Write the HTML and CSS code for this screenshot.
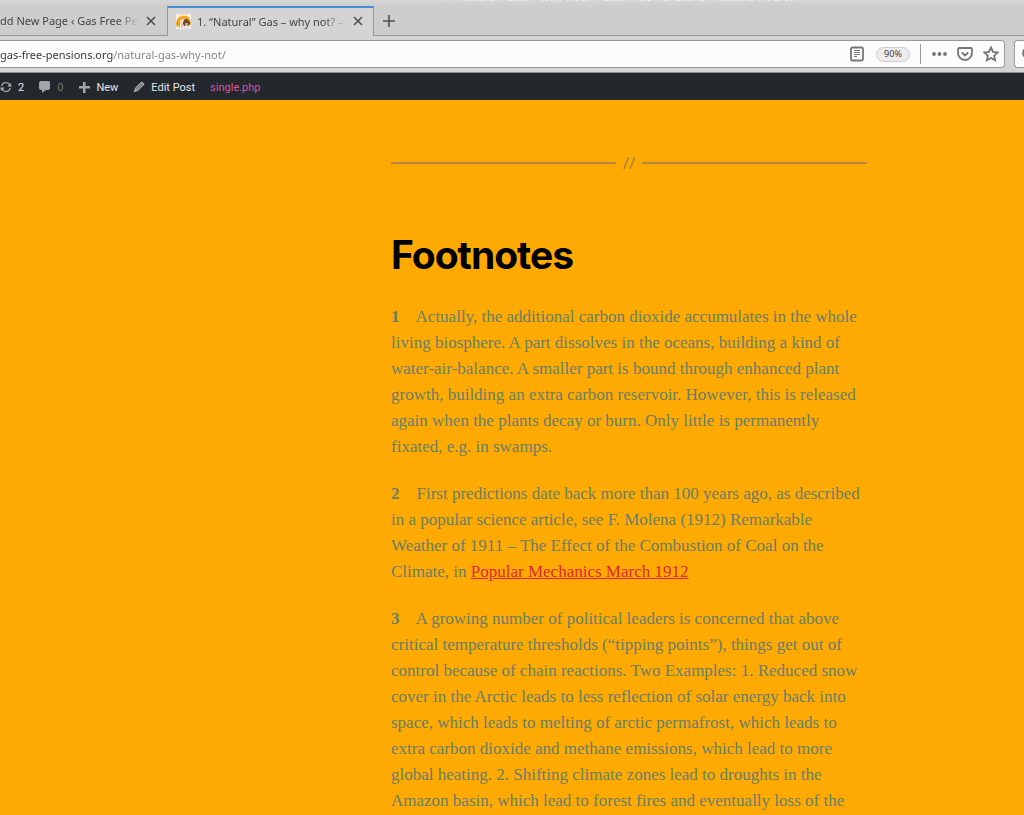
FILE: index.html
```html
<!DOCTYPE html>
<html lang="en">
<head>
    <meta charset="UTF-8">
    <meta name="viewport" content="width=device-width, initial-scale=1.0">
    <title>1. “Natural” Gas – why not? – Gas Free Pensions</title>
    <link rel="stylesheet" href="styles.css">
</head>
<body>
    <header class="browser">
        <div class="title-bar"><span class="window-title">1. “Natural” Gas – why not? – Gas Free Pensions - Mozilla Firefox</span></div>

        <div class="tabs">
            <div class="tab">
                <span class="tab-title">dd New Page ‹ Gas Free Pensions</span>
                <button class="icon-button" aria-label="Close tab">
                    <svg width="10" height="10" viewBox="0 0 10 10"><path d="M1 1l8 8M9 1l-8 8"/></svg>
                </button>
            </div>
            <div class="tab active">
                <svg class="favicon" width="15" height="15" viewBox="0 0 15 15">
                    <rect width="15" height="15" fill="#f6f1e8"/>
                    <path d="M0 11C0 7 1 5 3 3l4-1h4c2 1 4 4 4 8l-2 2-2-6-4-1-3 2-1 5z" fill="#f5a623"/>
                    <path d="M3 1h8" stroke="#f8cf86" stroke-width="1"/>
                    <path d="M7 10c0-3 1-5 3-5s4 2 4 5l-2 2H8z" fill="#6a4a28"/>
                    <path d="M4 8l1-1 2 1v6H4z" fill="#fdfdfd"/>
                    <path d="M9 9h3v3H9z" fill="#c9a888"/>
                    <path d="M1 13l1-6M3 14l1-6M6 14V8" stroke="#e58e20" stroke-width="1"/>
                    <path d="M8 13l2-1 3 1v2H8z" fill="#dfe3ee"/>
                </svg>
                <span class="tab-title">1. “Natural” Gas – why not? – Gas Free Pensions</span>
                <button class="icon-button" aria-label="Close tab">
                    <svg width="10" height="10" viewBox="0 0 10 10"><path d="M1 1l8 8M9 1l-8 8"/></svg>
                </button>
            </div>
            <button class="icon-button new-tab" aria-label="New tab">
                <svg width="14" height="14" viewBox="0 0 14 14"><path d="M7 1v12M1 7h12"/></svg>
            </button>
        </div>

        <div class="toolbar">
            <div class="address-bar">
                <input class="address" type="text" value="gas-free-pensions.org/natural-gas-why-not/" aria-label="Address">
                <button class="icon-button" aria-label="Reader view">
                    <svg width="14" height="16" viewBox="0 0 14 16"><rect x="1" y="1.500" width="12" height="13" rx="1.5"/><path class="thin" d="M4 4.500h6M4 6.500h6M4 8.500h6M4 10.500h3"/></svg>
                </button>
                <button class="zoom-level">90%</button>
                <span class="divider"></span>
                <button class="icon-button" aria-label="Page actions">
                    <svg width="16" height="16" viewBox="0 0 16 16"><g class="solid"><circle cx="3" cy="8" r="1.900"/><circle cx="8.500" cy="8" r="1.900"/><circle cx="14" cy="8" r="1.900"/></g></svg>
                </button>
                <button class="icon-button" aria-label="Save to Pocket">
                    <svg width="16" height="16" viewBox="0 0 16 16"><path d="M2.500 2h11a1.500 1.500 0 0 1 1.500 1.500V7a7 7 0 0 1-14 0V3.500A1.500 1.500 0 0 1 2.500 2zM4.800 6.500L8 9.600l3.200-3.100"/></svg>
                </button>
                <button class="icon-button" aria-label="Bookmark this page">
                    <svg width="16" height="16" viewBox="0 0 16 16"><path d="M8 1.500l2 4.300 4.700.6-3.500 3.200.9 4.700L8 12l-4.100 2.300.9-4.700L1.300 6.400 6 5.800z"/></svg>
                </button>
            </div>
            <div class="search-bar">
                <svg width="16" height="16" viewBox="0 0 16 16"><circle cx="7" cy="7" r="5"/><path d="M11 11l4 4"/></svg>
            </div>
        </div>
    </header>

    <nav class="admin-bar">
        <a class="admin-item" href="#">
            <svg width="12" height="12" viewBox="0 0 14 14"><path class="stroke" d="M2 6a5 5 0 0 1 9-2M12 8a5 5 0 0 1-9 2"/><path d="M8.500 6.500h5.500L12 2zM5.500 7.500H0L2 12z"/></svg>
            2
        </a>
        <a class="admin-item muted" href="#">
            <svg width="12" height="12" viewBox="0 0 12 12"><path d="M2 0h8a2 2 0 0 1 1 2v5a2 2 0 0 1-2 2H7l-4 3V9H2a2 2 0 0 1-2-2V2a2 2 0 0 1 2-2z"/></svg>
            0
        </a>
        <a class="admin-item" href="#">
            <svg width="12" height="12" viewBox="0 0 12 12"><path d="M5 1h2.500v4H12v2.500H7.500V12H5V7.500H1V5h4z"/></svg>
            New
        </a>
        <a class="admin-item" href="#">
            <svg width="12" height="12" viewBox="0 0 14 14"><path class="stroke" d="M2 12l1.500-4 6-6 2.500 2.500-6 6zM4.500 9.500l5-5"/><path d="M1 13l1.500-5 3.500 3.500zM8.500 2.500l2-2 3 3-2 2z"/></svg>
            Edit Post
        </a>
        <a class="admin-item template" href="#">single.php</a>
    </nav>

    <main class="page">
        <article class="post">
            <div class="separator">//</div>
            <h2>Footnotes</h2>
            <p><strong>1</strong>&nbsp;&nbsp;&nbsp; Actually, the additional carbon dioxide accumulates in the whole living biosphere. A part dissolves in the oceans, building a kind of water-air-balance. A smaller part is bound through enhanced plant growth, building an extra carbon reservoir. However, this is released again when the plants decay or burn. Only little is permanently fixated, e.g. in swamps.</p>
            <p><strong>2</strong>&nbsp;&nbsp;&nbsp; First predictions date back more than 100 years ago, as described in a popular science article, see F. Molena (1912) Remarkable Weather of 1911 – The Effect of the Combustion of Coal on the Climate, in <a href="#">Popular Mechanics March 1912</a></p>
            <p><strong>3</strong>&nbsp;&nbsp;&nbsp; A growing number of political leaders is concerned that above critical temperature thresholds (“tipping points”), things get out of control because of chain reactions. Two Examples: 1. Reduced snow cover in the Arctic leads to less reflection of solar energy back into space, which leads to melting of arctic permafrost, which leads to extra carbon dioxide and methane emissions, which lead to more global heating. 2. Shifting climate zones lead to droughts in the Amazon basin, which lead to forest fires and eventually loss of the</p>
        </article>
    </main>
</body>
</html>
```
FILE: styles.css
```css
* {
    margin: 0;
    padding: 0;
    box-sizing: border-box;
}

body {
    display: flex;
    flex-direction: column;
    height: 100vh;
    overflow: hidden;
    background: #ffa903;
    font-family: 'Noto Sans', sans-serif;
}

/* Browser window */
.browser {
    flex: none;
    background: #cdcdcd;
    color: #444;
    font-size: 11px;
}

.title-bar {
    display: flex;
    justify-content: center;
    align-items: flex-end;
    height: 6px;
    padding: 0 0 4px 212px;
    overflow: hidden;
    background: linear-gradient(#d6d6d6, #cdcdcd);
}

.window-title {
    height: 2px;
    overflow: hidden;
    display: flex;
    align-items: flex-end;
    line-height: 10px;
    font-size: 12px;
    color: #eee;
    white-space: nowrap;
}

.tabs {
    display: flex;
    height: 30px;
    border-bottom: 1px solid #999;
}

.tab {
    display: flex;
    align-items: center;
    gap: 6px;
    width: 167px;
    padding-right: 11px;
}

.tab.active {
    width: 207px;
    height: 30px;
    padding: 0 10px 2px 8px;
    background: #d4d4d4;
    border: 1px solid #999;
    border-top: 2px solid #4a90d9;
    border-bottom: none;
}

.tab-title {
    flex: 1;
    overflow: hidden;
    white-space: nowrap;
    -webkit-mask-image: linear-gradient(to left, transparent, #000 24px);
    mask-image: linear-gradient(to left, transparent, #000 24px);
}

.favicon {
    flex: none;
}

.icon-button {
    display: flex;
    flex: none;
    background: none;
    border: none;
    cursor: pointer;
}

.icon-button svg,
.search-bar svg {
    fill: none;
    stroke: #757575;
    stroke-width: 1.800;
}

.tab .icon-button svg,
.new-tab svg {
    stroke: #505050;
    stroke-width: 1.600;
}

.icon-button .thin {
    stroke-width: 1;
}

.icon-button .solid {
    fill: #757575;
    stroke: none;
}

.new-tab {
    align-items: center;
    padding: 0 8px;
}

.toolbar {
    display: flex;
    gap: 9px;
    height: 37px;
    padding: 4px 0;
    background: #d4d4d4;
    border-bottom: 1px solid #8a8a8a;
}

.address-bar {
    display: flex;
    flex: 1;
    align-items: center;
    gap: 10px;
    padding-right: 5px;
    background: #fcfcfc;
    border: 1px solid #999;
    border-left: none;
    border-radius: 0 4px 4px 0;
}

.address {
    flex: 1;
    min-width: 0;
    border: none;
    outline: none;
    font: inherit;
    color: transparent;
    /* domain dark, path grey */
    background: linear-gradient(to right, #333 113px, #808080 113px);
    -webkit-background-clip: text;
    background-clip: text;
}

.zoom-level {
    width: 34px;
    height: 15px;
    margin-left: 2px;
    background: #ececec;
    border: 1px solid #ccc;
    border-radius: 8px;
    font-family: inherit;
    font-size: 9px;
    line-height: 12px;
    color: #444;
}

.divider {
    width: 1px;
    height: 20px;
    background: #999;
}

.search-bar {
    display: flex;
    align-items: center;
    width: 10px;
    padding-left: 6px;
    overflow: hidden;
    background: #fcfcfc;
    border: 1px solid #999;
    border-right: none;
    border-radius: 4px 0 0 4px;
}

.search-bar svg {
    flex: none;
}

/* WordPress admin bar */
.admin-bar {
    display: flex;
    flex: none;
    align-items: center;
    gap: 15px;
    height: 27px;
    padding-top: 1px;
    background: #23282d;
    font-family: Roboto, sans-serif;
    font-size: 11px;
}

.admin-item {
    display: flex;
    align-items: center;
    gap: 6px;
    color: #e4e4e4;
    text-decoration: none;
}

.admin-item svg {
    fill: #a0a5aa;
}

.admin-item .stroke {
    fill: none;
    stroke: #a0a5aa;
    stroke-width: 1.500;
}

.admin-item.muted {
    color: #72777c;
}

.admin-item.template {
    color: #d354a0;
}

/* Page */
.page {
    flex: 1;
    min-height: 0;
    padding-left: 234px;
    overflow: hidden;
}

.post {
    max-width: 476px;
    margin: 0 auto;
    padding-top: 50px;
    font-family: 'Liberation Serif', serif;
    font-size: 17px;
    line-height: 26px;
    color: #67806c;
}

.separator {
    display: flex;
    align-items: center;
    gap: 7px;
    margin-bottom: 56px;
    font-family: 'Noto Sans', sans-serif;
    font-size: 17px;
    color: #a88446;
}

.separator::before,
.separator::after {
    content: '';
    flex: 1;
    height: 2px;
    background: #b58743;
}

h2 {
    margin-bottom: 26px;
    font-family: Inter, sans-serif;
    font-size: 39px;
    font-weight: 700;
    line-height: 46px;
    letter-spacing: -1px;
    color: #000;
}

p {
    margin-bottom: 21px;
}

p a {
    color: #d8293f;
}
```
